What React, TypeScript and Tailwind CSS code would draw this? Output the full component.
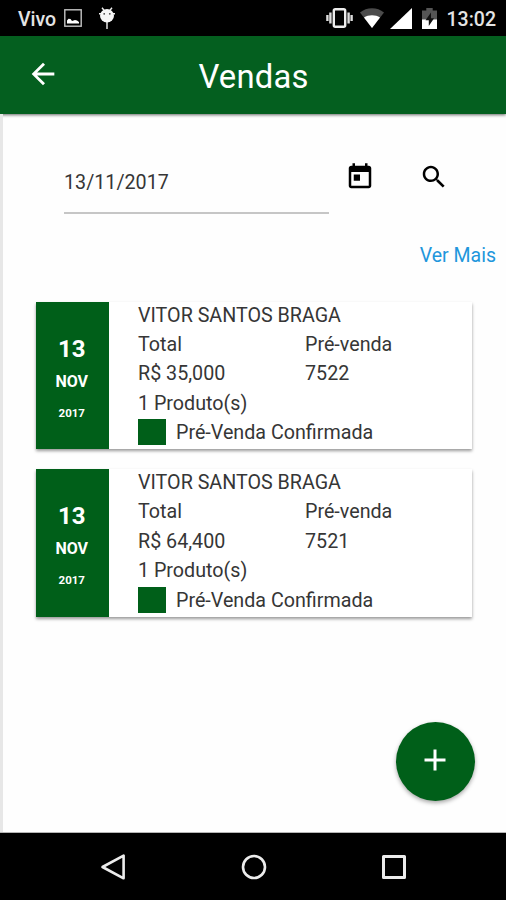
import type { ReactNode } from "react";

interface Sale {
  id: string;
  day: string;
  month: string;
  year: string;
  customer: string;
  total: string;
  products: string;
  status: string;
}

const SALES: Sale[] = [
  {
    id: "7522",
    day: "13",
    month: "NOV",
    year: "2017",
    customer: "VITOR SANTOS BRAGA",
    total: "R$ 35,000",
    products: "1 Produto(s)",
    status: "Pré-Venda Confirmada",
  },
  {
    id: "7521",
    day: "13",
    month: "NOV",
    year: "2017",
    customer: "VITOR SANTOS BRAGA",
    total: "R$ 64,400",
    products: "1 Produto(s)",
    status: "Pré-Venda Confirmada",
  },
];

function Icon({ className, children }: { className: string; children: ReactNode }) {
  return (
    <svg className={`block shrink-0 ${className}`} viewBox="0 0 24 24" fill="currentColor">
      {children}
    </svg>
  );
}

function StatusBar() {
  return (
    <div className="flex h-9 shrink-0 items-center bg-black pl-[18px] pr-[10px] text-[19.5px] font-medium text-[#e4e4e4]">
      <span className="w-[46px] pt-[3px] leading-none">Vivo</span>

      {/* Screenshot saved */}
      <svg className="h-[18px] w-[18px]" viewBox="0 0 18 18">
        <rect x="0.8" y="0.8" width="16.4" height="16.4" fill="none" stroke="#c4c4c4" strokeWidth="1.4" />
        <path d="M3 14.5v-3l1.5-1.8 2 .3L8 12l3-1 2 .5 2 1.5v1.5z" fill="#fff" />
      </svg>

      {/* Debug bug */}
      <svg className="ml-[17px] h-[22px] w-4" viewBox="0 0 16 22">
        <path d="M3 .8 5 3.2M13 .8l-2 2.4M8 14v8" stroke="#f2f2f2" strokeWidth="1.4" />
        <ellipse cx="8" cy="8.7" rx="7" ry="6.8" fill="#f7f7f7" />
        <path d="M0 6.8h2M14 6.8h2" stroke="#f2f2f2" strokeWidth="1.4" />
        <circle cx="5.2" cy="6.8" r="0.9" fill="#444" />
        <circle cx="10.8" cy="6.8" r="0.9" fill="#444" />
      </svg>

      {/* Vibrate */}
      <svg className="ml-auto h-5 w-[27px]" viewBox="0 0 27 20">
        <rect x="7.8" y="1.3" width="11.4" height="17.4" rx="1.5" fill="none" stroke="#ececec" strokeWidth="2.4" />
        <path d="M4.4 4.5v11M22.6 4.5v11M1.4 7v6M25.6 7v6" stroke="#dcdcdc" strokeWidth="2.4" />
      </svg>

      {/* Wifi */}
      <svg className="ml-[7px] h-5 w-6" viewBox="0 0 24 20">
        <path d="M12 20 0 4.6C3.4 1.8 7.5.3 12 .3s8.6 1.5 12 4.3z" fill="#4b4b4b" />
        <path d="M12 20 4 9.6c2.2-1.5 5-2.3 8-2.3s5.8.8 8 2.3z" fill="#fff" />
      </svg>

      {/* Signal */}
      <svg className="ml-[6px] h-[21px] w-[22px]" viewBox="0 0 22 21">
        <path d="M0 21 22 0v21z" fill="#fff" />
      </svg>

      {/* Battery */}
      <svg className="ml-[10px] h-[21px] w-[15px]" viewBox="0 0 15 21">
        <path d="M0 2.6h4.3V0h6.4v2.6H15V12H0z" fill="#555" />
        <path d="M0 11.5h15V21H0z" fill="#fff" />
        <path d="M9 4.5 3.5 12.2h3.3V18l5.3-7.800H9z" fill="#111" />
      </svg>

      <span className="ml-[10px] pt-[3px] leading-none">13:02</span>
    </div>
  );
}

function Header() {
  return (
    <header className="grid h-[78px] shrink-0 grid-cols-[1fr_auto_1fr] items-center bg-[#045f1f] text-white shadow-[0_1px_3px_rgba(0,0,0,0.6)]">
      <button className="ml-[26px] mb-[3px] justify-self-start">
        <Icon className="size-[34px]">
          <path d="M20 11H7.83l5.59-5.59L12 4l-8 8 8 8 1.41-1.41L7.83 13H20v-2z" />
        </Icon>
      </button>
      <h1 className="pl-[1px] pt-[5px] text-[32.8px] leading-none tracking-[0.2px]">Vendas</h1>
    </header>
  );
}

function SearchRow() {
  return (
    <div className="flex h-[100px] shrink-0 pl-[61px]">
      <div className="flex h-full w-[265px] items-end border-b-2 border-[#c6c6c6] pb-[17px] text-[19.7px] leading-[24px]">
        13/11/2017
      </div>
      <button className="ml-4 mt-12 self-start text-black">
        <Icon className="size-[30px]">
          <path d="M19 3h-1V1h-2v2H8V1H6v2H5c-1.11 0-1.990.9-1.990 2L3 19c0 1.100.890 2 2 2h14c1.100 0 2-.9 2-2V5c0-1.100-.9-2-2-2zm0 16H5V8h14v11zM7 10h5v5H7z" />
        </Icon>
      </button>
      <button className="ml-[44px] mt-12 self-start text-black">
        <Icon className="size-[30px]">
          <path d="M15.5 14h-.79l-.28-.27C15.41 12.590 16 11.110 16 9.500 16 5.910 13.090 3 9.500 3S3 5.910 3 9.500 5.910 16 9.500 16c1.610 0 3.090-.590 4.230-1.570l.270.280v.790l5 4.990L20.490 19l-4.990-5zm-6 0C7.010 14 5 11.990 5 9.500S7.010 5 9.500 5 14 7.010 14 9.500 11.990 14 9.500 14z" />
        </Icon>
      </button>
    </div>
  );
}

function SaleCard({ sale }: { sale: Sale }) {
  return (
    <article className="flex h-[147.5px] w-[436px] bg-white shadow-[0_2px_3px_rgba(0,0,0,0.4)]">
      <div className="flex w-[72.5px] shrink-0 flex-col items-center bg-[#005f19] pt-[34px] pr-[1px] font-bold text-white">
        <span className="text-[24px] leading-[27px]">{sale.day}</span>
        <span className="mt-[9px] text-[16px] leading-[20px]">{sale.month}</span>
        <span className="mt-[12px] text-[11.5px] leading-[18px]">{sale.year}</span>
      </div>
      <div className="grid flex-1 grid-cols-[167px_1fr] grid-rows-[28.5px_29.5px_29.5px_29.5px_29.5px] items-center pl-[29.5px] text-[19.7px] leading-none">
        <span className="col-span-2">{sale.customer}</span>
        <span>Total</span>
        <span>Pré-venda</span>
        <span>{sale.total}</span>
        <span>{sale.id}</span>
        <span className="col-span-2">{sale.products}</span>
        <div className="col-span-2 flex items-center gap-[10px]">
          <span className="mb-[2px] h-[26px] w-7 bg-[#005f19]" />
          <span>{sale.status}</span>
        </div>
      </div>
    </article>
  );
}

function NavBar() {
  return (
    <nav className="flex h-[68px] shrink-0 items-center justify-between border-t border-[#b5b5b5] bg-black pl-[100px] pr-[99px] text-[#ececec]">
      <svg className="h-7 w-[27px]" viewBox="0 0 27 28" fill="none" stroke="currentColor" strokeWidth="2.6" strokeLinejoin="round">
        <path d="M23.6 2.7v22.6L2.5 14z" />
      </svg>
      <svg className="size-[28px]" viewBox="0 0 28 28" fill="none" stroke="currentColor" strokeWidth="2.6">
        <circle cx="14" cy="14" r="11" />
      </svg>
      <svg className="size-[26px]" viewBox="0 0 26 26" fill="none" stroke="currentColor" strokeWidth="3" strokeLinejoin="round">
        <rect x="2.5" y="2.5" width="21" height="21" />
      </svg>
    </nav>
  );
}

export default function App() {
  return (
    <div className="relative flex h-[900px] w-[506px] flex-col overflow-hidden bg-[#fefefe] font-[Roboto,sans-serif] text-[#363636]">
      <StatusBar />
      <Header />
      <main className="flex flex-1 flex-col border-l-3 border-[#e7e7e7]">
        <SearchRow />
        <a className="mr-[10px] mt-[30px] self-end text-[19.5px] leading-[24px] text-[#2196dc]">Ver Mais</a>
        <div className="ml-[33px] mt-[33.5px] flex flex-col gap-5">
          {SALES.map((sale) => (
            <SaleCard key={sale.id} sale={sale} />
          ))}
        </div>
      </main>
      <NavBar />

      {/* Floating "new sale" button */}
      <button className="absolute bottom-[99.5px] right-[31.5px] flex size-[78.5px] items-center justify-center rounded-full bg-[#005f19] pb-[3px] text-white shadow-[0_2px_4px_rgba(0,0,0,0.35)]">
        <Icon className="size-9">
          <path d="M19 13h-6v6h-2v-6H5v-2h6V5h2v6h6v2z" />
        </Icon>
      </button>
    </div>
  );
}
